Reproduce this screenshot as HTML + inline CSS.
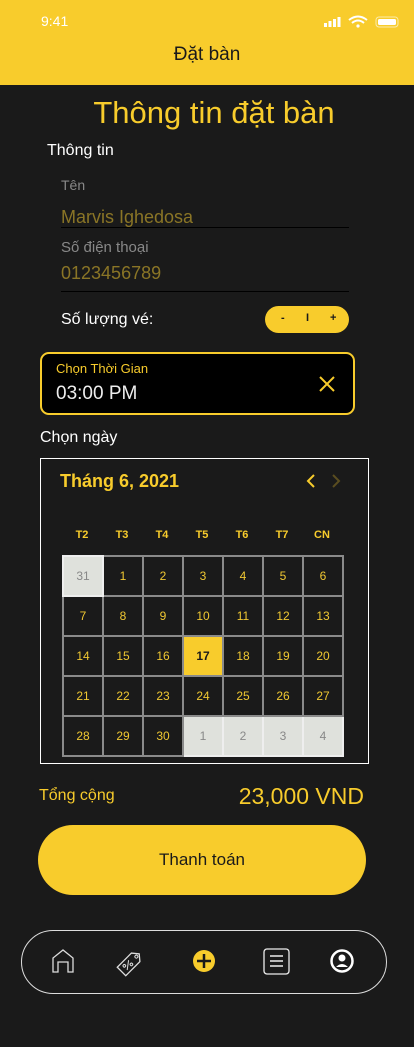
<!DOCTYPE html>
<html><head><meta charset="utf-8"><style>
*{margin:0;padding:0;box-sizing:border-box}
body{width:414px;height:1047px;background:#1a1a1a;font-family:"Liberation Sans",sans-serif;position:relative;overflow:hidden;color:#fff}
.a{position:absolute}
.y{color:#f8cc2c}
table{position:absolute;left:62px;top:555px;border-collapse:collapse}
td{width:40px;height:40px;border:2px solid #8a8a8a;text-align:center;font-size:12px;color:#f0c832}
td.g{background:#dfe1dc;color:#888;border-color:#eee}
td.s{background:#f8cc2c;color:#1a1a1a;font-weight:bold}
</style></head><body>
<div class="a" style="left:0;top:0;width:414px;height:85px;background:#f8cc2c"></div>
<div class="a" style="left:41px;top:13px;font-size:14px;color:#fff">9:41</div>
<svg class="a" style="left:322px;top:15px" width="78" height="14" viewBox="0 0 78 14">
<rect x="2" y="8" width="3" height="4" fill="#fff"/><rect x="6.5" y="6" width="3" height="6" fill="#fff"/><rect x="11" y="4" width="3" height="8" fill="#fff"/><rect x="15.5" y="2" width="3" height="10" fill="#fff"/>
<path d="M27 5 Q36 -2 45 5 M30 8 Q36 3 42 8" stroke="#fff" stroke-width="2" fill="none"/><circle cx="36" cy="11" r="1.6" fill="#fff"/>
<rect x="54" y="2" width="22" height="10" rx="3" fill="none" stroke="#fff" stroke-opacity=".6"/><rect x="56" y="4" width="18" height="6" rx="1.5" fill="#fff"/></svg>
<div class="a" style="left:0;width:414px;top:44px;text-align:center;font-size:19px;color:#1a1a1a">Đặt bàn</div>
<div class="a y" style="left:7px;width:414px;top:95px;text-align:center;font-size:31px">Thông tin đặt bàn</div>
<div class="a" style="left:47px;top:142px;font-size:16px">Thông tin</div>
<div class="a" style="left:61px;top:177px;font-size:14px;color:#888">Tên</div>
<div class="a" style="left:61px;top:207px;font-size:18px;color:#8a7526">Marvis Ighedosa</div>
<div class="a" style="left:61px;top:227px;width:288px;height:1px;background:#000"></div>
<div class="a" style="left:61px;top:239px;font-size:15px;color:#888">Số điện thoại</div>
<div class="a" style="left:61px;top:263px;font-size:18px;color:#8a7526">0123456789</div>
<div class="a" style="left:61px;top:291px;width:288px;height:1px;background:#000"></div>
<div class="a" style="left:61px;top:311px;font-size:16px">Số lượng vé:</div>
<div class="a" style="left:265px;top:306px;width:84px;height:27px;border-radius:14px;background:#f8cc2c;color:#1a1a1a;font-size:11px;font-weight:bold">
<span class="a" style="left:16px;top:6px">-</span><span class="a" style="left:41px;top:6px">I</span><span class="a" style="left:65px;top:6px">+</span></div>
<div class="a" style="left:40px;top:352px;width:315px;height:63px;border:2px solid #f8cc2c;border-radius:9px;background:#000"></div>
<div class="a y" style="left:56px;top:361px;font-size:13px">Chọn Thời Gian</div>
<div class="a" style="left:56px;top:383px;font-size:19px;color:#eee">03:00 PM</div>
<svg class="a" style="left:318px;top:375px" width="18" height="18"><path d="M2 2L16 16M16 2L2 16" stroke="#f8cc2c" stroke-width="2"/></svg>
<div class="a" style="left:40px;top:429px;font-size:16px">Chọn ngày</div>
<div class="a" style="left:40px;top:458px;width:329px;height:306px;border:1px solid #fff"></div>
<div class="a y" style="left:60px;top:471px;font-size:18px;font-weight:bold">Tháng 6, 2021</div>
<svg class="a" style="left:304px;top:473px" width="40" height="16"><path d="M10 2L4 8L10 14" stroke="#f8cc2c" stroke-width="2" fill="none"/><path d="M29 2L35 8L29 14" stroke="#5a4d20" stroke-width="2" fill="none"/></svg>
<div class="a y" style="left:62px;top:529px;width:280px;display:flex;font-size:11px;font-weight:bold"><span style="flex:1;text-align:center">T2</span><span style="flex:1;text-align:center">T3</span><span style="flex:1;text-align:center">T4</span><span style="flex:1;text-align:center">T5</span><span style="flex:1;text-align:center">T6</span><span style="flex:1;text-align:center">T7</span><span style="flex:1;text-align:center">CN</span></div>
<table>
<tr><td class="g">31</td><td>1</td><td>2</td><td>3</td><td>4</td><td>5</td><td>6</td></tr>
<tr><td>7</td><td>8</td><td>9</td><td>10</td><td>11</td><td>12</td><td>13</td></tr>
<tr><td>14</td><td>15</td><td>16</td><td class="s">17</td><td>18</td><td>19</td><td>20</td></tr>
<tr><td>21</td><td>22</td><td>23</td><td>24</td><td>25</td><td>26</td><td>27</td></tr>
<tr><td>28</td><td>29</td><td>30</td><td class="g">1</td><td class="g">2</td><td class="g">3</td><td class="g">4</td></tr>
</table>
<div class="a y" style="left:39px;top:787px;font-size:16px">Tổng cộng</div>
<div class="a y" style="right:50px;top:783px;font-size:23px">23,000 VND</div>
<div class="a" style="left:38px;top:825px;width:328px;height:70px;border-radius:35px;background:#f8cc2c;color:#1a1a1a;font-size:17px;text-align:center;line-height:70px">Thanh toán</div>
<div class="a" style="left:21px;top:930px;width:366px;height:64px;border:1.5px solid #ddd;border-radius:32px"></div>
<svg class="a" style="left:0;top:930px" width="414" height="64">
<path d="M53 42V28L63 20L73 28V42H68V32H58V42Z" stroke="#ddd" stroke-width="1.3" fill="none"/>
<g transform="rotate(-45 130 33)"><path d="M118 27H138L143 33L138 39H118Z" stroke="#ddd" stroke-width="1.3" fill="none"/><circle cx="139" cy="33" r="1.5" stroke="#ddd" fill="none"/><circle cx="124" cy="31" r="1.3" stroke="#ddd" fill="none"/><circle cx="130" cy="35" r="1.3" stroke="#ddd" fill="none"/><path d="M123 36L131 30" stroke="#ddd"/></g>
<circle cx="204" cy="31" r="11" fill="#f8cc2c"/><path d="M204 24V38M197 31H211" stroke="#1a1a1a" stroke-width="2.5"/>
<rect x="264" y="19" width="25" height="25" rx="3" stroke="#eee" stroke-width="1.3" fill="none"/><path d="M270 26H283M270 31H283M270 36H283" stroke="#eee" stroke-width="1.5"/>
<circle cx="342" cy="31" r="10.5" stroke="#fff" stroke-width="2.5" fill="none"/><circle cx="342" cy="28" r="3.5" fill="#fff"/><path d="M336 37Q342 31 348 37" fill="#fff"/>
</svg>
</body></html>
